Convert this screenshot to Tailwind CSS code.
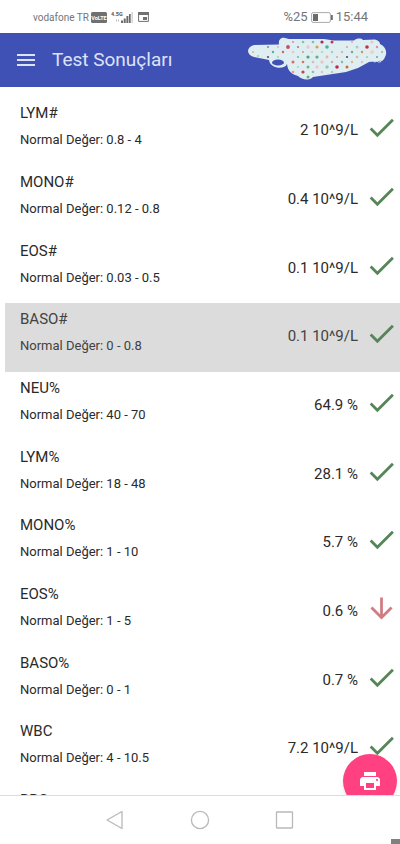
<!DOCTYPE html>
<html lang="tr">
<head>
<meta charset="utf-8">
<meta name="viewport" content="width=device-width, initial-scale=1">
<title>Test Sonuçları</title>
<script src="https://cdn.jsdelivr.net/npm/@tailwindcss/browser@4"></script>
</head>
<body class="h-screen flex flex-col overflow-hidden bg-white text-[#2a2a2a] font-['Roboto',sans-serif]">

<div class="h-[33px] shrink-0 flex items-center justify-between pl-[33px] pr-8 pt-px text-[#757575]">
  <div class="flex items-center">
    <span class="text-[10px]">vodafone TR</span>
    <svg class="ml-[2px] w-4 h-[11px]" viewBox="0 0 16 11"><rect width="16" height="11" rx="1.5" fill="#707070"/><text x="8" y="7.500" text-anchor="middle" font-size="5.500" font-weight="700" fill="#fff" font-family="Roboto">VoLTE</text></svg>
    <svg class="ml-1 w-[22px] h-3" viewBox="0 0 22 12"><text x="0" y="5" font-size="5.500" font-weight="700" fill="#555" font-family="Roboto">4.5G</text><path d="M5 8.500h1v2h-1zM7 8.500h1v2h-1z" fill="#bbb"/><path d="M10 9.500h2v2.500h-2zM12.700 7.500h2v4.500h-2zM15.400 5h2v7h-2zM18 3h1.700v9h-1.700z" fill="#6b6b6b"/><path d="M20.500 1h1.300v11h-1.300z" fill="#ccc"/></svg>
    <svg class="ml-[5px] w-[11px] h-[10px]" viewBox="0 0 11 10"><path d="M.6.600h9.800v8.800H.6z" fill="none" stroke="#707070"/><path d="M0 0h11v3H0zM5 5h4v3H5z" fill="#707070"/></svg>
  </div>
  <div class="flex items-center">
    <span class="text-[13px]">%25</span>
    <svg class="mx-[3px] w-[22px] h-[11px]" viewBox="0 0 22 11"><rect x=".6" y=".6" width="18.800" height="9.800" rx="1.500" fill="none" stroke="#aaa"/><path d="M2 2h5v7H2zM20 3h1.800v5H20z" fill="#6b6b6b"/></svg>
    <span class="text-[13px]">15:44</span>
  </div>
</div>

<header class="h-[54px] shrink-0 flex items-center bg-[#3f51b5] pl-[14px] pr-3 text-[#dce3f8]">
  <button type="button" aria-label="Menü" class="w-6 h-6">
    <svg class="w-6 h-6" viewBox="0 0 24 24" fill="currentColor"><path d="M3 18h18v-2H3zm0-5h18v-2H3zm0-7v2h18V6z"/></svg>
  </button>
  <h1 class="ml-[14px] text-[19px] leading-6">Test Sonuçları</h1>
  <svg class="ml-auto w-[140px] h-[46px]" viewBox="0 0 140 46" aria-hidden="true">
    <path d="M6 8L31 7.500C30 2 34 0 37 1L41 2L76 2L86 3.500L106 3.500C109 1 113 1 115 3L127 2.500C130 3 132 5 132 7C137 9 140 15 137 20C136 23 134 24 131 24L121 25L110 31L98 35L65 40C61 44 54 43 50 39C44 37 40 35 39 27C37 33 22 32 21 23L6 20C-2 18-2 10 6 8Z" fill="#dfeef0"/>
    <ellipse cx="30" cy="25.500" rx="6" ry="3" fill="#3f51b5"/>
    <path d="M125 24q2 2 4 0q3 3 6-2" fill="none" stroke="#dfeef0" stroke-width="1"/>
    <g id="dots"></g>
  </svg>
</header>

<main class="relative flex-1 min-h-0 overflow-hidden pt-[10px]">
  <ul id="results" class="pl-[5px]"></ul>
  <button type="button" aria-label="Yazdır" class="absolute right-[3px] -bottom-[13px] w-[54px] h-[54px] rounded-full bg-[#ff4081] text-white shadow-md flex items-center justify-center">
    <svg class="w-6 h-6" viewBox="0 0 24 24" fill="currentColor"><path d="M19 8H5c-1.660 0-3 1.340-3 3v6h4v4h12v-4h4v-6c0-1.660-1.340-3-3-3zm-3 11H8v-5h8v5zm3-7c-.55 0-1-.45-1-1s.45-1 1-1 1 .45 1 1-.45 1-1 1zm-1-9H6v4h12V3z"/></svg>
  </button>
</main>

<nav class="relative h-[49px] shrink-0 flex items-center justify-center gap-[65px] border-t border-[#dcdcdc] bg-white text-[#b9b9b9]">
  <button type="button" aria-label="Geri" class="w-5 h-5"><svg class="w-5 h-5" viewBox="0 0 20 20" fill="none" stroke="currentColor" stroke-width="1.300" stroke-linejoin="round"><path d="M17 1.500v17L2 10z"/></svg></button>
  <button type="button" aria-label="Ana ekran" class="w-5 h-5"><svg class="w-5 h-5" viewBox="0 0 20 20" fill="none" stroke="currentColor" stroke-width="1.300"><circle cx="10" cy="10" r="8.600"/></svg></button>
  <button type="button" aria-label="Son uygulamalar" class="w-5 h-5"><svg class="w-5 h-5" viewBox="0 0 20 20" fill="none" stroke="currentColor" stroke-width="1.300"><rect x="1.500" y="2" width="16" height="16" rx=".5"/></svg></button>
  <span class="absolute right-0 bottom-0 w-[9px] h-[5px] bg-[#808080]"></span>
</nav>

<script>
const rows = [
  ["LYM#", "0.8 - 4", "2 10^9/L"],
  ["MONO#", "0.12 - 0.8", "0.4 10^9/L"],
  ["EOS#", "0.03 - 0.5", "0.1 10^9/L"],
  ["BASO#", "0 - 0.8", "0.1 10^9/L", "pressed"],
  ["NEU%", "40 - 70", "64.9 %"],
  ["LYM%", "18 - 48", "28.1 %"],
  ["MONO%", "1 - 10", "5.7 %"],
  ["EOS%", "1 - 5", "0.6 %", "low"],
  ["BASO%", "0 - 1", "0.7 %"],
  ["WBC", "4 - 10.5", "7.2 10^9/L"],
  ["RBC"]
];
const check = '<svg class="w-[33px] h-[33px] text-[#568557]" viewBox="0 0 24 24" fill="currentColor" role="img" aria-label="Normal"><path d="M9 16.170 4.830 12l-1.420 1.410L9 19 21 7l-1.410-1.410z"/></svg>';
const down = '<svg class="w-[33px] h-[33px] text-[#d07c80]" viewBox="0 0 24 24" fill="currentColor" role="img" aria-label="Düşük"><path d="m20 12-1.410-1.410L13 16.170V4h-2v12.170l-5.580-5.590L4 12l8 8z"/></svg>';
document.getElementById("results").innerHTML = rows.map(([name, range, value, state]) => `
  <li class="h-[69px] nth-[3n]:h-[68px] flex items-start justify-between pl-[15px] pr-[2px] ${state === "pressed" ? "bg-[#dcdcdc] text-[#424242]" : ""}">
    <div class="pt-[6px]">
      <h2 class="text-[15px] leading-5">${name}</h2>
      ${range ? `<p class="mt-[7px] text-[13px] leading-5">Normal Değer: ${range}</p>` : ""}
    </div>
    ${value ? `<div class="flex items-center gap-[7px] pt-[14px]">
      <span class="pt-1 text-[15px] leading-5">${value}</span>${state === "low" ? down : check}
    </div>` : ""}
  </li>`).join("");

// Polka dots over the header patch: x, y, radius, colour
const dots = [[5,14,1,"#e8a98c"],[20,9,1,"#5d9b8d"],[20,19,1.1,"#714263"],[10,18,.9,"#8fc7a0"],[25,14,1.200,"#5fae90"],[30,9,1,"#d8b8c0"],[30,19,.8,"#77b59b"],[35,14,1.200,"#dd5a79"],[40,9,1.900,"#c94a69"],[45,4,1.100,"#e0909d"],[45,14,1.300,"#e0c8cc"],[50,9,1,"#936f9f"],[55,4,1.300,"#88c5a0"],[60,9,1.700,"#ecc6c8"],[65,4,1.300,"#87bda8"],[69,9,1.600,"#e19b55"],[74,4,1.600,"#a42d5a"],[79,9,1.800,"#4caf98"],[84,4,1.500,"#cc2f56"],[104,4,1.100,"#e0b0b8"],[99,9,1,"#e79d93"],[109,9,1.500,"#a9d0bc"],[114,14,1.200,"#db8b6e"],[119,9,1.800,"#bf3146"],[124,4,1.500,"#efc3c5"],[129,9,1.200,"#df8ba3"],[134,14,1,"#8bb8a8"],[124,14,1.900,"#efcfc7"],[129,19,1,"#5b9ec1"],[104,14,1.200,"#6aac88"],[99,19,1.100,"#594368"],[94,14,1.200,"#d2b6c2"],[89,19,1,"#e7a184"],[79,19,1.400,"#efb0a0"],[84,14,1.200,"#a3cbbd"],[74,14,1.200,"#c5d5b0"],[69,19,1.600,"#67ad80"],[64,14,1.100,"#e5c4c4"],[60,19,1.600,"#4e9e83"],[55,14,1,"#c99a8c"],[50,19,1,"#6db796"],[45,24,1.500,"#df6770"],[55,24,1.300,"#cf7b53"],[65,24,1.300,"#d5bac0"],[74,24,1.700,"#efc4c8"],[84,24,1.200,"#d9a5a6"],[94,24,1.200,"#83b5a4"],[104,24,1.200,"#deb985"],[114,24,1.200,"#d5c4cd"],[109,19,1.300,"#e4b19b"],[119,19,1,"#9cc8b1"],[60,29,1.500,"#71b28c"],[50,29,1.100,"#aecfc1"],[69,29,1.700,"#efc7cb"],[79,29,1.700,"#97c7ac"],[89,29,1.800,"#bd2755"],[99,29,1.500,"#cf6838"],[45,34,1.300,"#e19d86"],[55,34,1.600,"#cb3c56"],[65,34,1.300,"#8ac1a6"],[74,34,1.300,"#e8bfbf"],[84,34,1.200,"#a9cfbd"],[60,39,1.500,"#65aa88"]];
document.getElementById("dots").innerHTML = dots.map(([x, y, r, c]) => `<circle cx="${x}" cy="${y + 1}" r="${r}" fill="${c}"/>`).join("");
</script>
</body>
</html>
